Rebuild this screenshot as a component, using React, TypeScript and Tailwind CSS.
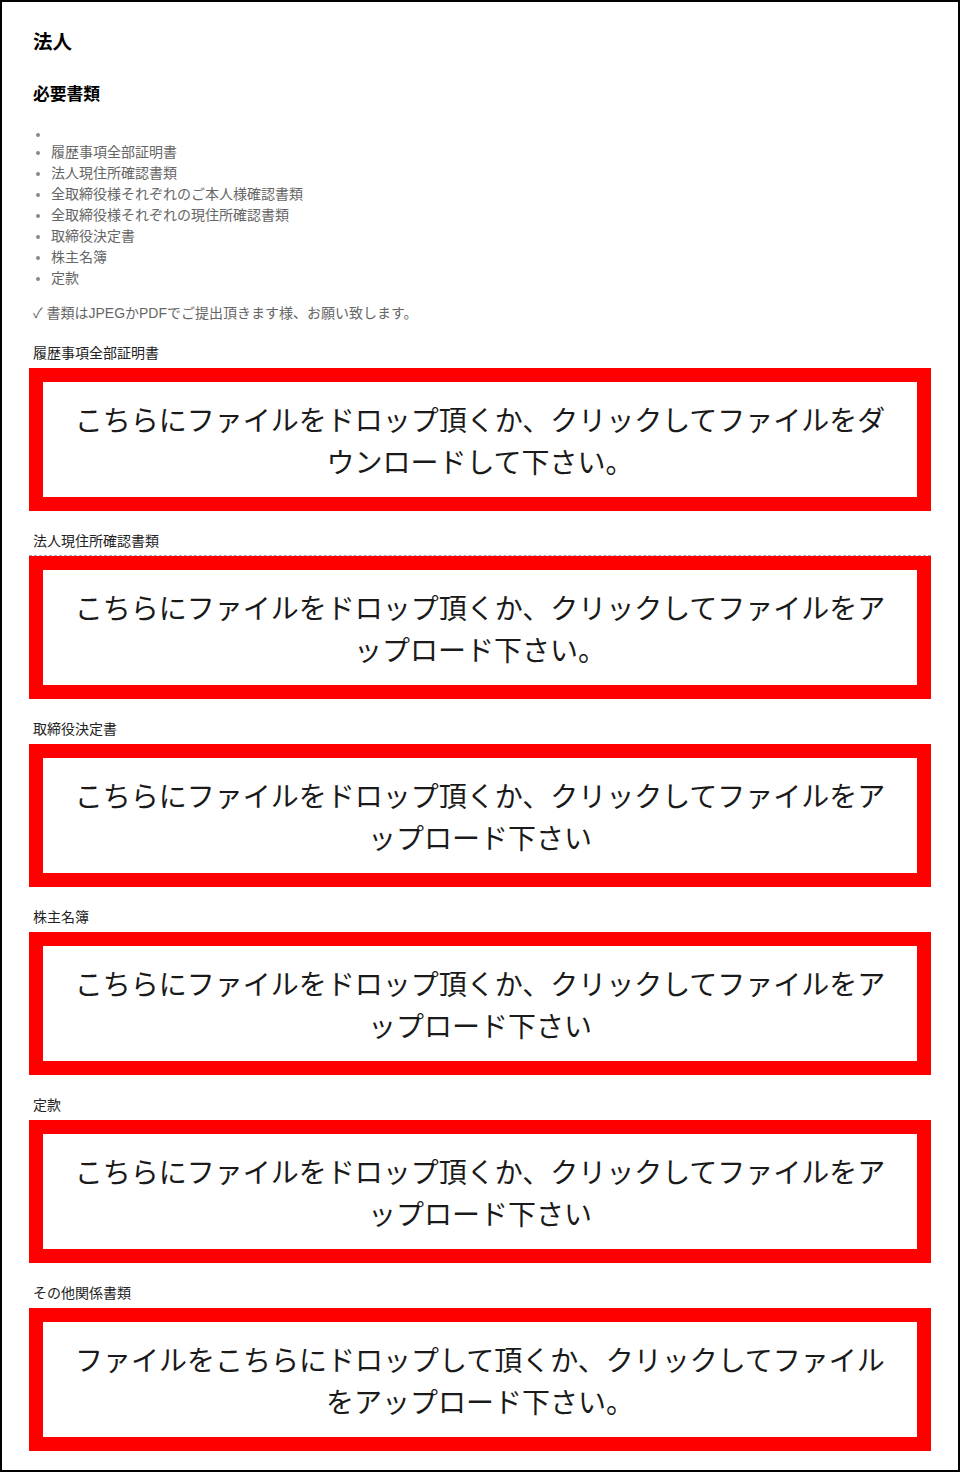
import React from 'react';

const font = { fontFamily: '"Liberation Sans", "Noto Sans CJK JP", sans-serif' };

const docs = [
  '履歴事項全部証明書',
  '法人現住所確認書類',
  '全取締役様それぞれのご本人様確認書類',
  '全取締役様それぞれの現住所確認書類',
  '取締役決定書',
  '株主名簿',
  '定款',
];

const uploads = [
  { label: '履歴事項全部証明書', text: 'こちらにファイルをドロップ頂くか、クリックしてファイルをダウンロードして下さい。' },
  { label: '法人現住所確認書類', text: 'こちらにファイルをドロップ頂くか、クリックしてファイルをアップロード下さい。', dashed: true },
  { label: '取締役決定書', text: 'こちらにファイルをドロップ頂くか、クリックしてファイルをアップロード下さい' },
  { label: '株主名簿', text: 'こちらにファイルをドロップ頂くか、クリックしてファイルをアップロード下さい' },
  { label: '定款', text: 'こちらにファイルをドロップ頂くか、クリックしてファイルをアップロード下さい' },
  { label: 'その他関係書類', text: 'ファイルをこちらにドロップして頂くか、クリックしてファイルをアップロード下さい。' },
];

function DropZone({ label, text, dashed }: { label: string; text: string; dashed?: boolean }) {
  return (
    <div className="mt-[20px]">
      <p className="pl-1 text-[14px] leading-[20px] text-[#222]">{label}</p>
      <div className="relative mt-[5px]">
        {dashed && <div className="absolute -top-px left-0 right-0 border-t border-dashed border-[#aaa]" />}
        <div className="border-[14px] border-[#ff0000] bg-white px-6 pt-[19px] pb-[12px] text-center text-[28px] leading-[42px] text-[#1a1a1a] cursor-pointer">
          {text}
        </div>
      </div>
    </div>
  );
}

export default function App() {
  return (
    <div className="bg-white border-2 border-black min-h-[1472px] px-[27px] pt-[28px] pb-[17px]" style={font}>
      <div className="pl-1">
        <h1 className="text-[19.5px] leading-[24px] font-bold text-black">法人</h1>
        <h2 className="mt-[29px] text-[16.8px] leading-[24px] font-bold text-black">必要書類</h2>

        <ul className="mt-[17px] list-disc pl-[18px] text-[14px] leading-[21px] text-[#666] marker:text-[#888]">
          <li className="h-[18px]"></li>
          {docs.map((d) => (
            <li key={d}>{d}</li>
          ))}
        </ul>

        <p className="mt-[14px] text-[14px] leading-[20px] text-[#666]">✓ 書類はJPEGかPDFでご提出頂きます様、お願い致します。</p>
      </div>

      <div className="mt-[9px]">
        {uploads.map((u) => (
          <DropZone key={u.label} {...u} />
        ))}
      </div>
    </div>
  );
}
